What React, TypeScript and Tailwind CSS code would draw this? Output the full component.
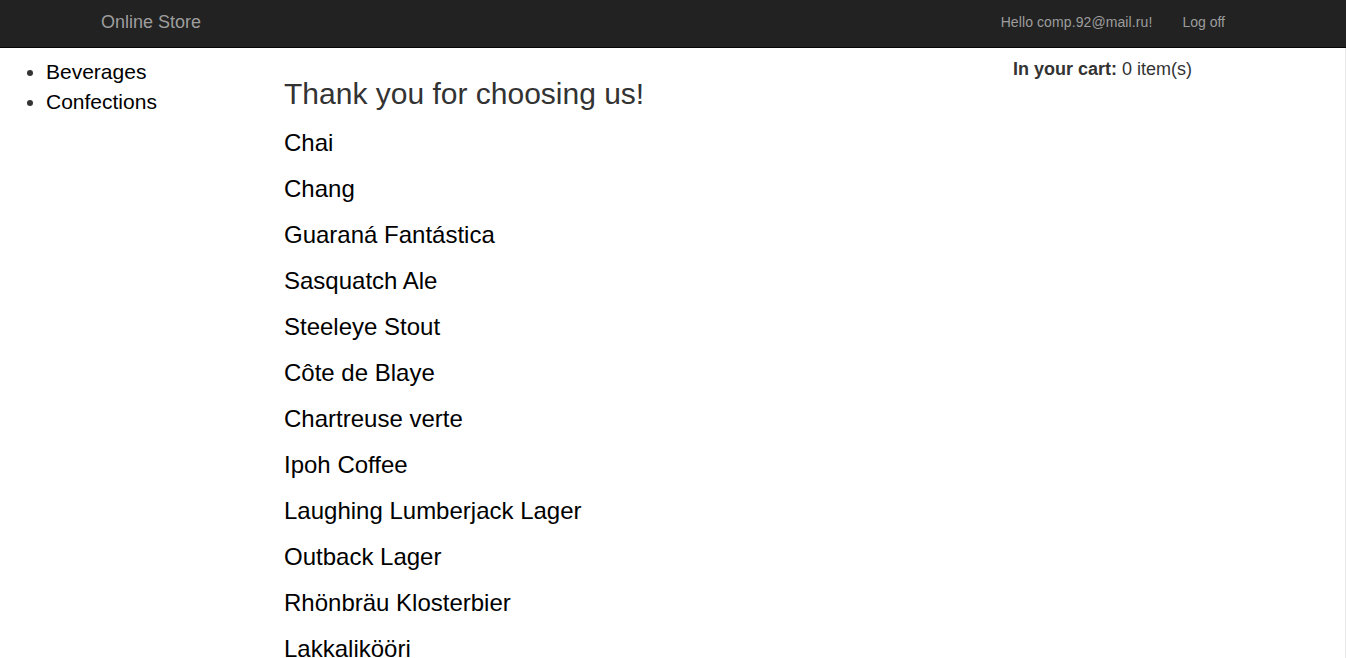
const categories = ["Beverages", "Confections"];

const products = [
  "Chai",
  "Chang",
  "Guaraná Fantástica",
  "Sasquatch Ale",
  "Steeleye Stout",
  "Côte de Blaye",
  "Chartreuse verte",
  "Ipoh Coffee",
  "Laughing Lumberjack Lager",
  "Outback Lager",
  "Rhönbräu Klosterbier",
  "Lakkalikööri",
];

export default function App() {
  return (
    <div className="min-h-screen bg-white font-['Liberation_Sans',Arial,sans-serif]">
      {/* navbar */}
      <nav className="flex h-12 items-center border-b border-[#080808] bg-[#222222] pb-[3px]">
        <a className="ml-[101px] text-[18px] leading-[20px] text-[#9d9d9d]">Online Store</a>
        <div className="ml-auto mr-[121px] flex items-center text-[14px] leading-[20px] text-[#9d9d9d]">
          <span className="tracking-[0.1px]">Hello comp.92@mail.ru!</span>
          <a className="ml-[30px]">Log off</a>
        </div>
      </nav>

      <div className="flex border-r border-[#e8e8e8]">
        {/* categories */}
        <ul className="w-[284px] shrink-0 list-disc pl-[46px] pt-[9px] text-[21px] leading-[30px] text-black marker:text-[#333]">
          {categories.map((c) => (
            <li key={c}>{c}</li>
          ))}
        </ul>

        {/* order summary */}
        <div className="w-[729px] shrink-0 pt-[29px]">
          <h2 className="text-[30px] leading-[33px] text-[#333333]">Thank you for choosing us!</h2>
          <div className="mt-[20px] flex flex-col gap-[20px]">
            {products.map((p) => (
              <div key={p} className="text-[24px] leading-[26px] text-black">
                {p}
              </div>
            ))}
          </div>
        </div>

        {/* cart */}
        <div className="pt-[8px] text-[18px] leading-[26px] text-[#333333]">
          <b>In your cart:</b> 0 item(s)
        </div>
      </div>
    </div>
  );
}
